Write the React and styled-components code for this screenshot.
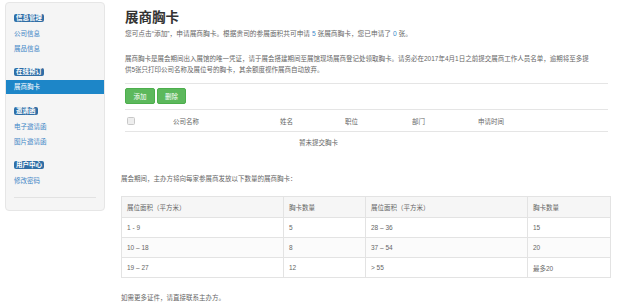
import React from 'react';
import styled, { createGlobalStyle } from 'styled-components';

const GlobalStyle = createGlobalStyle`
    body {
        margin: 0;
        background: #fff;
        font-family: "Liberation Sans", "Noto Sans CJK SC", sans-serif;
        font-size: 6.5px;
        color: #666;
    }
`;

const menu = [
    { title: '信息管理', links: ['公司信息', '展品信息'] },
    { title: '在线预订', links: ['展商胸卡'], active: '展商胸卡' },
    { title: '邀请函', links: ['电子邀请函', '图片邀请函'], gap: 13 },
    { title: '用户中心', links: ['修改密码'] },
];

const quota = [
    ['1 - 9', '5', '28 – 36', '15'],
    ['10 – 18', '8', '37 – 54', '20'],
    ['19 – 27', '12', '> 55', '最多20'],
];

const App = () => {
    return (
        <>
            <GlobalStyle />
            <Page>
                <Sidebar>
                    {menu.map((group, i) => (
                        <Group key={group.title} gap={i === 0 ? 0 : group.gap || 12}>
                            <Badge>{group.title}</Badge>
                            <LinkList>
                                {group.links.map((link) => (
                                    <MenuLink key={link} active={link === group.active}>
                                        {link}
                                    </MenuLink>
                                ))}
                            </LinkList>
                        </Group>
                    ))}
                    <Divider />
                </Sidebar>
                <Main>
                    <Section>
                        <Title>展商胸卡</Title>
                        <Intro>
                            您可点击“添加”，申请展商胸卡。根据贵司的参展面积共可申请 <Num>5</Num> 张展商胸卡，您已申请了 <Num>0</Num> 张。
                        </Intro>
                        <Notice>
                            展商胸卡是展会期间出入展馆的唯一凭证，请于展会搭建期间至展馆现场展商登记处领取胸卡。请务必在2017年4月1日之前提交展商工作人员名单，逾期将至多提<br />
                            供5张只打印公司名称及展位号的胸卡，其余额度视作展商自动放弃。
                        </Notice>
                        <Rule />
                        <Toolbar>
                            <Button width={30}>添加</Button>
                            <Button width={29}>删除</Button>
                        </Toolbar>
                        <HeaderRow>
                            <Cell><Check /></Cell>
                            <Cell>公司名称</Cell>
                            <Cell>姓名</Cell>
                            <Cell>职位</Cell>
                            <Cell>部门</Cell>
                            <Cell>申请时间</Cell>
                        </HeaderRow>
                        <EmptyRow>暂未提交胸卡</EmptyRow>
                    </Section>
                    <Lead>展会期间，主办方将向每家参展商发放以下数量的展商胸卡：</Lead>
                    <Quota>
                        <colgroup>
                            <col style={{ width: 162 }} />
                            <col style={{ width: 82 }} />
                            <col style={{ width: 162 }} />
                            <col style={{ width: 83 }} />
                        </colgroup>
                        <thead>
                            <tr>
                                <Th>展位面积（平方米）</Th>
                                <Th>胸卡数量</Th>
                                <Th>展位面积（平方米）</Th>
                                <Th>胸卡数量</Th>
                            </tr>
                        </thead>
                        <tbody>
                            {quota.map((row, i) => (
                                <Tr key={i} striped={i === 1}>
                                    {row.map((v, j) => <Td key={j}>{v}</Td>)}
                                </Tr>
                            ))}
                        </tbody>
                    </Quota>
                    <Footnote>如需更多证件，请直接联系主办方。</Footnote>
                </Main>
            </Page>
        </>
    );
};

export default App;

const Page = styled.div`
    display: flex;
    align-items: flex-start;
    width: 640px;
    height: 304px;
    overflow: hidden;
`;

const Sidebar = styled.div`
    margin: 2px 0 0 5px;
    width: 100px;
    box-sizing: border-box;
    padding: 11px 0 12px;
    background: #f5f5f5;
    border: 1px solid #e6e6e6;
    border-radius: 4px;
`;

const Group = styled.div`
    margin-top: ${({ gap }) => gap}px;
`;

const Badge = styled.span`
    display: inline-block;
    margin-left: 8px;
    padding: 0 2px;
    height: 8px;
    line-height: 8px;
    font-size: 6.5px;
    font-weight: bold;
    color: #fff;
    background: #2f6ea6;
    border-radius: 2px;
`;

const LinkList = styled.div`
    margin-top: 4px;
    display: flex;
    flex-direction: column;
`;

const MenuLink = styled.div`
    height: ${({ active }) => (active ? 14 : 15)}px;
    line-height: ${({ active }) => (active ? 14 : 15)}px;
    padding-left: 8px;
    font-size: 6.5px;
    color: ${({ active }) => (active ? '#fff' : '#3f86c6')};
    background: ${({ active }) => (active ? '#1d86c8' : 'transparent')};
`;

const Divider = styled.div`
    margin: 9px 8px 0;
    border-top: 1px solid #e2e2e2;
`;

const Main = styled.div`
    margin-left: 16px;
    width: 489px;
`;

const Section = styled.div`
    padding: 0 2px 0 4px;
`;

const Title = styled.h2`
    margin: 8px 0 0;
    font-family: "Noto Sans CJK SC", sans-serif;
    font-size: 13.5px;
    line-height: 16px;
    font-weight: bold;
    color: #333;
`;

const Intro = styled.p`
    margin: 4.5px 0 0;
    line-height: 10px;
    font-size: 6.7px;
`;

const Num = styled.span`
    color: #428bca;
`;

const Notice = styled.p`
    margin: 14px 0 0;
    line-height: 11px;
    white-space: nowrap;
`;

const Rule = styled.div`
    margin-top: 8.5px;
    border-top: 1px solid #e5e5e5;
`;

const Toolbar = styled.div`
    display: flex;
    gap: 2px;
    margin-top: 4px;
    padding-bottom: 5px;
    border-bottom: 1px solid #e5e5e5;
`;

const Button = styled.div`
    width: ${({ width }) => width}px;
    height: 16px;
    box-sizing: border-box;
    display: flex;
    align-items: center;
    justify-content: center;
    background: #5cb85c;
    border: 1px solid #4cae4c;
    border-radius: 2px;
    color: #fff;
    font-size: 6.5px;
`;

const HeaderRow = styled.div`
    display: grid;
    grid-template-columns: 48px 107px 65px 67px 66px 1fr;
    align-items: center;
    height: 21px;
    border-bottom: 1px solid #e5e5e5;
`;

const Cell = styled.div`
    display: flex;
    align-items: center;
`;

const Check = styled.span`
    display: inline-block;
    margin-left: 2px;
    width: 6px;
    height: 6px;
    background: #eee;
    border: 1px solid #c8c8c8;
    border-radius: 1.5px;
`;

const EmptyRow = styled.div`
    height: 21px;
    line-height: 21px;
    padding-left: 174px;
`;

const Lead = styled.p`
    margin: 21px 0 0;
    line-height: 10px;
`;

const Quota = styled.table`
    margin-top: 12px;
    width: 489px;
    table-layout: fixed;
    border-collapse: collapse;
    border: 1px solid #e3e3e3;
`;

const Th = styled.th`
    height: 20px;
    padding: 0 5px;
    text-align: left;
    font-weight: normal;
    background: #f6f6f6;
    border: 1px solid #e3e3e3;
`;

const Tr = styled.tr`
    background: ${({ striped }) => (striped ? '#fbfbfb' : '#fff')};
`;

const Td = styled.td`
    height: 19px;
    padding: 0 5px;
    border: 1px solid #e3e3e3;
`;

const Footnote = styled.p`
    margin: 15px 0 0;
    line-height: 10px;
`;
